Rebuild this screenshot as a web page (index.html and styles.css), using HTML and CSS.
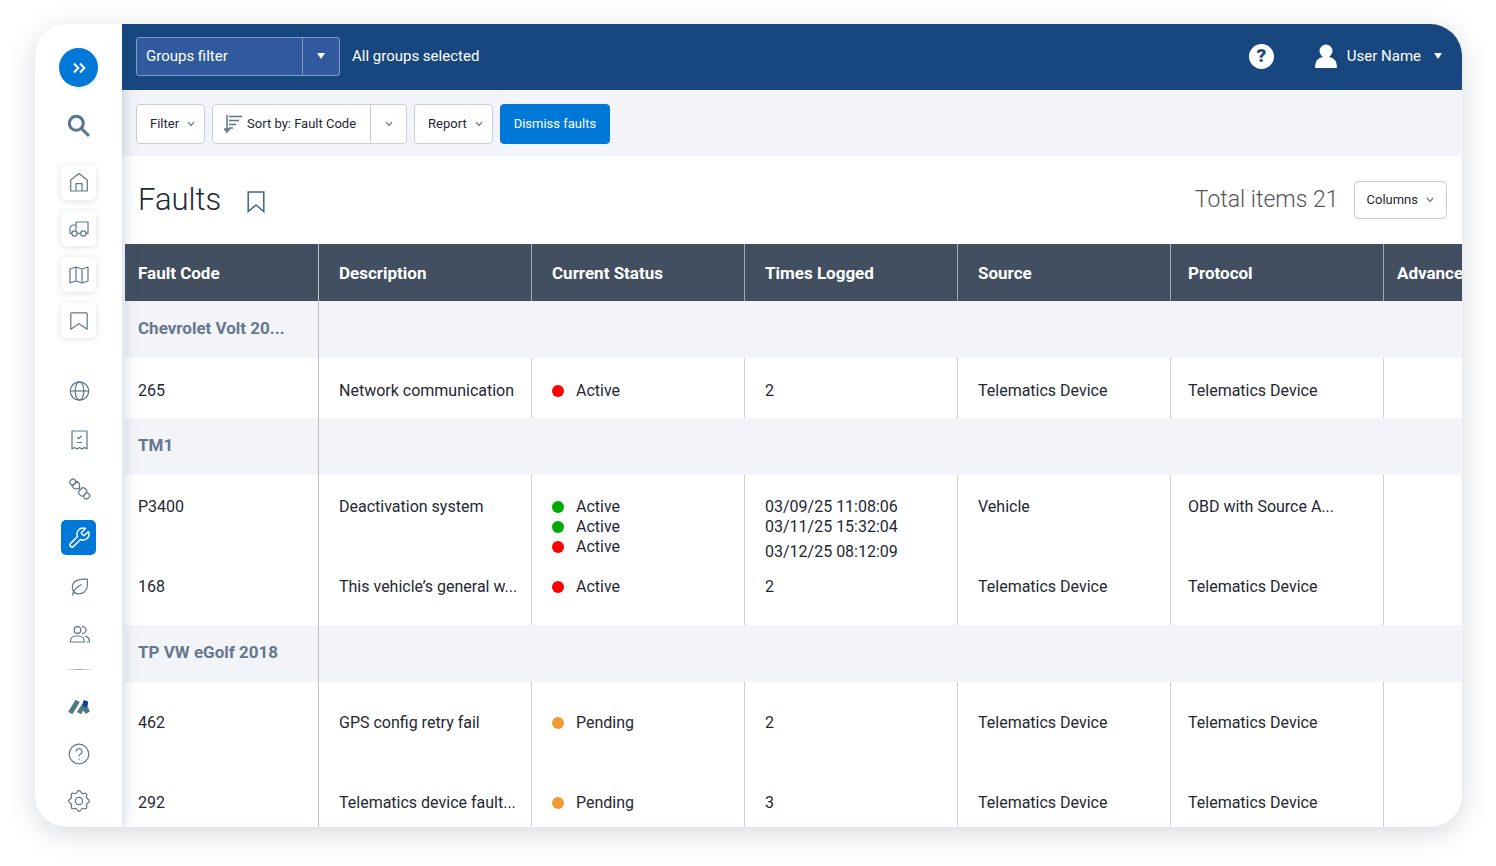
FILE: index.html
```html
<!DOCTYPE html>
<html lang="en">
<head>
    <meta charset="UTF-8">
    <meta name="viewport" content="width=device-width, initial-scale=1.0">
    <title>Faults</title>
    <link rel="stylesheet" href="styles.css">
</head>
<body>

<div class="app">
    <nav class="sidebar" aria-label="Main">
        <button class="toggle" aria-label="Expand menu">
            <svg width="14" height="12" viewBox="0 0 14 12"><path d="M2 1.5L6.3 6L2 10.5M8 1.5L12.3 6L8 10.5"/></svg>
        </button>
        <button class="nav-item search" aria-label="Search">
            <svg class="icon" viewBox="0 0 24 24"><circle cx="9.3" cy="9.3" r="7"/><path d="M14.5 14.5L22 22"/></svg>
        </button>

        <div class="nav-group pinned">
            <a href="#" class="nav-item" aria-label="Home">
                <svg class="icon" viewBox="0 0 24 24"><path d="M3.7 9L12 2.6L20.3 9V20H3.7ZM9 20V12.7H15V20"/></svg>
            </a>
            <a href="#" class="nav-item" aria-label="Vehicles">
                <svg class="icon" viewBox="0 0 24 24"><path d="M9 13.8V5H21V16.3H18.9M13.6 16.3H10.1M9 8H7Q3 8 3 12V16.3H4.9"/><circle cx="7.5" cy="16.5" r="2.6"/><circle cx="16.3" cy="16.5" r="2.6"/></svg>
            </a>
            <a href="#" class="nav-item" aria-label="Map">
                <svg class="icon" viewBox="0 0 24 24"><path d="M3 6L9 4L15 6L21 4V18L15 20L9 18L3 20ZM9 4V18M15 6V20"/></svg>
            </a>
            <a href="#" class="nav-item" aria-label="Saved">
                <svg class="icon" viewBox="0 0 24 24"><path d="M3.8 4.8Q3.8 3.8 4.8 3.8H19.2Q20.2 3.8 20.2 4.8V20.2L12 14.7L3.8 20.2Z"/></svg>
            </a>
        </div>

        <div class="nav-group sections">
            <a href="#" class="nav-item" aria-label="Productivity">
                <svg class="icon" viewBox="0 0 24 24"><circle cx="12.5" cy="12" r="9.2"/><ellipse cx="12.5" cy="12" rx="4.3" ry="9.2"/><path d="M3.3 12H21.7"/></svg>
            </a>
            <a href="#" class="nav-item" aria-label="Compliance">
                <svg class="icon" viewBox="0 0 24 24"><path d="M5 3H20V21L17.5 19.5L15 21L12.5 19.5L10 21L7.5 19.5L5 21ZM10.3 9.2L11.8 10.5L14.6 7.8M10 14.5H15"/></svg>
            </a>
            <a href="#" class="nav-item" aria-label="Safety">
                <svg class="icon" viewBox="0 0 24 24"><g transform="translate(12.7 12) rotate(45)"><rect x="-12.4" y="-3" width="5" height="6" rx="2"/><path d="M-7.4 -3.5H-4L-1.2 -1.2V1.2L-4 3.5H-7.4ZM-1.2 0H1"/><rect x="1" y="-4" width="6.4" height="8" rx="2"/><rect x="7.4" y="-3" width="5" height="6" rx="2"/></g></svg>
            </a>
            <a href="#" class="nav-item active" aria-label="Maintenance" aria-current="page">
                <svg class="icon" viewBox="0 0 24 24"><path d="M14.7 6.3a1 1 0 0 0 0 1.4l1.6 1.6a1 1 0 0 0 1.4 0l3.77-3.77a6 6 0 0 1-7.94 7.94l-6.91 6.91a2.12 2.12 0 0 1-3-3l6.91-6.91a6 6 0 0 1 7.94-7.94z"/></svg>
            </a>
            <a href="#" class="nav-item" aria-label="Sustainability">
                <svg class="icon" viewBox="0 0 24 24"><path d="M20.3 4.2C14 4 8 4.3 5.8 9.3C4.3 13 6 18 10.5 18.8C15.5 19.4 19.5 16.5 20.2 12C20.5 9.5 20.5 7 20.3 4.2ZM5.5 20.5C6.5 15 9.5 11.5 14.8 9.5"/></svg>
            </a>
            <a href="#" class="nav-item" aria-label="People">
                <svg class="icon" viewBox="0 0 24 24"><circle cx="10.5" cy="6" r="3.3"/><path d="M3.3 18Q3.3 12 9.3 12H11.5Q17.3 12 17.3 18ZM15 2.8A3.3 3.3 0 1 1 15 9.2M18 12.2Q22.5 13 22.5 18H19.5"/></svg>
            </a>
        </div>

        <hr class="divider">

        <div class="nav-group bottom">
            <a href="#" class="nav-item" aria-label="Marketplace">
                <svg class="icon brand" viewBox="0 0 24 24"><path class="teal" d="M1.2 16.8L8.6 4.8L12.8 7L5.4 19.2ZM10 17L15.2 8.8L18.6 11.5L14 19.2ZM17 12L20.5 11L22.8 16.5L18.8 19L15.8 15Z"/><path class="navy" d="M15.2 9.5L16.8 5L21.2 6.6L20.6 11L17.5 13Z"/></svg>
            </a>
            <a href="#" class="nav-item" aria-label="Support">
                <svg class="icon" viewBox="0 0 24 24"><circle cx="12" cy="12" r="9.8"/><path d="M9 9.6A3 3 0 1 1 13.6 12.1Q12 13 12 14.5M12 16.6V17.8"/></svg>
            </a>
            <a href="#" class="nav-item" aria-label="Settings">
                <svg class="icon" viewBox="-12 -12 24 24"><path d="M9.12 -1.81Q11.6 0 9.12 1.81Q6.84 2.83 7.73 5.17Q8.2 8.2 5.17 7.73Q2.83 6.84 1.81 9.12Q0 11.6 -1.81 9.12Q-2.83 6.84 -5.17 7.73Q-8.2 8.2 -7.73 5.17Q-6.84 2.83 -9.12 1.81Q-11.6 0 -9.12 -1.81Q-6.84 -2.83 -7.73 -5.17Q-8.2 -8.2 -5.17 -7.73Q-2.83 -6.84 -1.81 -9.12Q0 -11.6 1.81 -9.12Q2.83 -6.84 5.17 -7.73Q8.2 -8.2 7.73 -5.17Q6.84 -2.83 9.12 -1.81Z"/><circle r="3.6"/></svg>
            </a>
        </div>
    </nav>

    <main class="main">
        <header class="topbar">
            <div class="groups">
                <input type="text" class="groups-input" placeholder="Groups filter" aria-label="Groups filter">
                <button class="groups-arrow" aria-label="Show groups"><span class="caret"></span></button>
            </div>
            <span class="groups-status">All groups selected</span>
            <button class="help" aria-label="Help">?</button>
            <button class="user">
                <svg width="22" height="24" viewBox="0 0 22 24"><circle cx="11" cy="7" r="6.5"/><path d="M0 24Q0 14.5 7.5 13L8 11H14L14.5 13Q22 14.5 22 24Z"/></svg>
                User Name
                <span class="caret"></span>
            </button>
        </header>

        <div class="toolbar">
            <button class="btn">Filter <svg class="chevron" viewBox="0 0 8 6"><path d="M1 1L4 4.5L7 1"/></svg></button>
            <div class="sort">
                <select class="sort-select" aria-label="Sort order">
                    <option>Sort by: Fault Code</option>
                    <option>Sort by: Description</option>
                    <option>Sort by: Source</option>
                </select>
                <svg class="sort-icon" viewBox="0 0 18 18"><path d="M3 0V15M0.5 14L3 17L5.5 14ZM5 1.5H18M5 5.5H15M5 9.5H12M5 13H9"/></svg>
                <span class="sort-arrow"><svg class="chevron" viewBox="0 0 8 6"><path d="M1 1L4 4.5L7 1"/></svg></span>
            </div>
            <button class="btn">Report <svg class="chevron" viewBox="0 0 8 6"><path d="M1 1L4 4.5L7 1"/></svg></button>
            <button class="btn primary">Dismiss faults</button>
        </div>

        <div class="page-title">
            <h1>Faults</h1>
            <button class="bookmark" aria-label="Bookmark this page">
                <svg width="18" height="22" viewBox="0 0 18 22"><path d="M1.2 1H16.8V20.5L9 14L1.2 20.5Z"/></svg>
            </button>
            <span class="total">Total items 21</span>
            <button class="btn">Columns <svg class="chevron" viewBox="0 0 8 6"><path d="M1 1L4 4.5L7 1"/></svg></button>
        </div>

        <div class="table-wrap">
            <table class="faults">
                <thead>
                    <tr>
                        <th class="code">Fault Code</th>
                        <th>Description</th>
                        <th>Current Status</th>
                        <th>Times Logged</th>
                        <th>Source</th>
                        <th class="protocol">Protocol</th>
                        <th class="advanced">Advanced</th>
                    </tr>
                </thead>
                <tbody>
                    <tr class="group"><th class="code">Chevrolet Volt 20...</th><td colspan="6"></td></tr>
                    <tr>
                        <td class="code">265</td>
                        <td>Network communication</td>
                        <td><span class="status red">Active</span></td>
                        <td>2</td>
                        <td>Telematics Device</td>
                        <td class="protocol">Telematics Device</td>
                        <td></td>
                    </tr>
                    <tr class="group"><th class="code">TM1</th><td colspan="6"></td></tr>
                    <tr class="multi">
                        <td class="code">P3400</td>
                        <td>Deactivation system</td>
                        <td>
                            <span class="status green">Active</span>
                            <span class="status green">Active</span>
                            <span class="status red">Active</span>
                        </td>
                        <td>03/09/25 11:08:06<br>03/11/25 15:32:04<span class="latest">03/12/25 08:12:09</span></td>
                        <td>Vehicle</td>
                        <td class="protocol">OBD with Source A...</td>
                        <td></td>
                    </tr>
                    <tr class="after-multi">
                        <td class="code">168</td>
                        <td>This vehicle’s general w...</td>
                        <td><span class="status red">Active</span></td>
                        <td>2</td>
                        <td>Telematics Device</td>
                        <td class="protocol">Telematics Device</td>
                        <td></td>
                    </tr>
                    <tr class="group"><th class="code">TP VW eGolf 2018</th><td colspan="6"></td></tr>
                    <tr class="tall">
                        <td class="code">462</td>
                        <td>GPS config retry fail</td>
                        <td><span class="status orange">Pending</span></td>
                        <td>2</td>
                        <td>Telematics Device</td>
                        <td class="protocol">Telematics Device</td>
                        <td></td>
                    </tr>
                    <tr class="tall">
                        <td class="code">292</td>
                        <td>Telematics device fault...</td>
                        <td><span class="status orange">Pending</span></td>
                        <td>3</td>
                        <td>Telematics Device</td>
                        <td class="protocol">Telematics Device</td>
                        <td></td>
                    </tr>
                </tbody>
            </table>
        </div>
    </main>
</div>

</body>
</html>
```
FILE: styles.css
```css
* {
    box-sizing: border-box;
}
body {
    margin: 0;
    height: 100vh;
    padding: 24px 34px 39px 35px;
    display: flex;
    background: #fff;
    font-family: Roboto, "Liberation Sans", sans-serif;
    font-size: 16px;
    line-height: 20px;
    color: #1f2833;
}
button, input, select {
    font: inherit;
    color: inherit;
    margin: 0;
    padding: 0;
    border: none;
    background: none;
}
button {
    cursor: pointer;
}
.app {
    flex: 1;
    min-width: 0;
    display: flex;
    overflow: hidden;
    border-radius: 32px;
    background: #fff;
    box-shadow: 0 6px 28px rgba(50, 65, 85, 0.2);
}

/* sidebar */
.sidebar {
    z-index: 1;
    flex: none;
    width: 87px;
    padding-top: 24px;
    display: flex;
    flex-direction: column;
    align-items: center;
    background: #fff;
    box-shadow: 0 0 14px rgba(60, 80, 105, 0.3);
}
.toggle {
    width: 39px;
    height: 39px;
    display: flex;
    align-items: center;
    justify-content: center;
    border-radius: 50%;
    background: #0078d7;
}
.toggle svg {
    fill: none;
    stroke: #fff;
    stroke-width: 2;
}
.nav-item {
    width: 35px;
    height: 35px;
    display: flex;
    align-items: center;
    justify-content: center;
    border-radius: 5px;
}
.icon {
    width: 24px;
    height: 24px;
    fill: none;
    stroke: #5f7689;
    stroke-width: 1.2;
    stroke-linejoin: round;
}
.search {
    margin-top: 21px;
}
.search .icon {
    stroke: #56778a;
    stroke-width: 3;
}
.nav-group {
    display: flex;
    flex-direction: column;
}
.pinned {
    margin-top: 22px;
    gap: 11px;
}
.pinned .nav-item {
    box-shadow: 0 1px 6px rgba(60, 80, 105, 0.18);
}
.sections {
    margin-top: 35px;
    gap: 14px;
}
.active {
    background: #0078d7;
}
.active .icon {
    stroke: #fff;
    stroke-width: 1.5;
}
.divider {
    width: 30px;
    height: 1px;
    margin: 16px 0 19px;
    border: none;
    background: linear-gradient(90deg, transparent, #9aa8b5, transparent);
}
.bottom {
    gap: 12px;
}
.brand {
    stroke: none;
}
.teal {
    fill: #4f7a80;
}
.navy {
    fill: #07469c;
}

/* top bar */
.main {
    flex: 1;
    min-width: 0;
    display: flex;
    flex-direction: column;
}
.topbar {
    z-index: 2;
    flex: none;
    height: 66px;
    padding: 0 20px 2px 14px;
    display: flex;
    align-items: center;
    background: #17477e;
    color: #fff;
    font-size: 15px;
}
.groups {
    width: 204px;
    height: 39px;
    display: flex;
    border: 1px solid #7e9cca;
    border-radius: 3px;
    background: #305a9d;
}
.groups-input {
    flex: 1;
    min-width: 0;
    padding-left: 9px;
}
.groups-input::placeholder {
    color: #fff;
    opacity: 1;
}
.groups-arrow {
    width: 37px;
    display: flex;
    align-items: center;
    justify-content: center;
    border-left: 1px solid #7e9cca;
}
.caret {
    border: 4px solid transparent;
    border-top: 6px solid #fff;
    border-bottom: none;
}
.groups-status {
    margin-left: 12px;
}
.help {
    width: 25px;
    height: 25px;
    margin-left: auto;
    border-radius: 50%;
    background: #fff;
    color: #17477e;
    font-size: 19px;
    font-weight: 900;
}
.user {
    margin-left: 41px;
    display: flex;
    align-items: center;
    gap: 10px;
}
.user svg {
    fill: #fff;
}
.user .caret {
    margin-left: 3px;
}

/* toolbar */
.toolbar {
    flex: none;
    height: 66px;
    padding: 2px 14px 0;
    display: flex;
    align-items: center;
    gap: 7px;
    background: #f2f4f9;
    font-size: 13px;
}
.btn {
    height: 40px;
    padding: 0 9px 0 13px;
    display: flex;
    align-items: center;
    gap: 8px;
    border: 1px solid #c9ced6;
    border-radius: 4px;
    background: #fff;
}
.chevron {
    width: 8px;
    height: 6px;
    fill: none;
    stroke: #6b7f86;
    stroke-width: 1.2;
}
.primary {
    padding: 0 13px;
    border-color: #0078d7;
    background: #0078d7;
    color: #fff;
}
.sort {
    height: 40px;
    display: grid;
    grid-template-columns: 34px 1fr 36px;
    align-items: center;
    border: 1px solid #c9ced6;
    border-radius: 4px;
    background: #fff;
}
.sort > * {
    grid-row: 1;
}
.sort-select {
    grid-column: 1 / -1;
    height: 38px;
    padding: 0 46px 0 34px;
    appearance: none;
}
.sort-icon {
    grid-column: 1;
    width: 18px;
    height: 18px;
    margin-left: 11px;
    fill: none;
    stroke: #5f7689;
    stroke-width: 1.5;
    pointer-events: none;
}
.sort-arrow {
    grid-column: 3;
    height: 38px;
    display: flex;
    align-items: center;
    justify-content: center;
    border-left: 1px solid #c9ced6;
    pointer-events: none;
}

/* title row */
.page-title {
    flex: none;
    height: 88px;
    padding: 0 15px 0 16px;
    display: flex;
    align-items: center;
    font-size: 13px;
}
h1 {
    margin: 0;
    font-size: 31px;
    line-height: 36px;
    font-weight: 300;
}
.bookmark {
    margin: 3px 0 0 26px;
    height: 22px;
}
.bookmark svg {
    display: block;
    fill: none;
    stroke: #44637f;
    stroke-width: 1.5;
}
.total {
    margin: 0 15px 0 auto;
    color: #555;
    font-size: 23px;
    font-weight: 300;
}
.page-title .btn {
    height: 38px;
    padding: 0 12px;
}

/* faults table */
.table-wrap {
    flex: 1;
    min-height: 0;
    margin-left: 3px;
    overflow: hidden;
}
.faults {
    width: 1472px;
    table-layout: fixed;
    border-spacing: 0;
}
.faults th, .faults td {
    padding: 0 0 0 20px;
    border-right: 1px solid #cdd2d7;
    text-align: left;
    white-space: nowrap;
}
.faults td {
    height: 60px;
    padding-top: 23px;
    vertical-align: top;
}
.faults thead th {
    height: 57px;
    border-color: #a3abb5;
    background: #414f60;
    color: #fff;
    font-size: 17px;
    font-weight: 700;
}
.faults .code {
    width: 194px;
    padding-left: 13px;
    border-right: 1px solid #b9c0c8;
}
.faults .protocol {
    padding-left: 17px;
}
.faults .advanced {
    padding-left: 13px;
}
.faults .group th {
    height: 57px;
    padding-bottom: 3px;
    background: #f2f4f9;
    color: #66788d;
    font-size: 17px;
    font-weight: 700;
}
.faults .group td {
    height: 57px;
    padding: 0;
    background: #f2f4f9;
}
.faults .multi td {
    padding-top: 22px;
}
.faults .after-multi td {
    height: 63px;
    padding-top: 15px;
}
.faults .tall td {
    height: 80px;
    padding-top: 2px;
    vertical-align: middle;
}
.status {
    display: flex;
    align-items: center;
    gap: 12px;
}
.status::before {
    content: "";
    width: 12px;
    height: 12px;
    border-radius: 50%;
}
.red::before {
    background: #f00;
}
.green::before {
    background: #0a0;
}
.orange::before {
    background: #f09a38;
}
.latest {
    display: block;
    padding-top: 5px;
}
```
